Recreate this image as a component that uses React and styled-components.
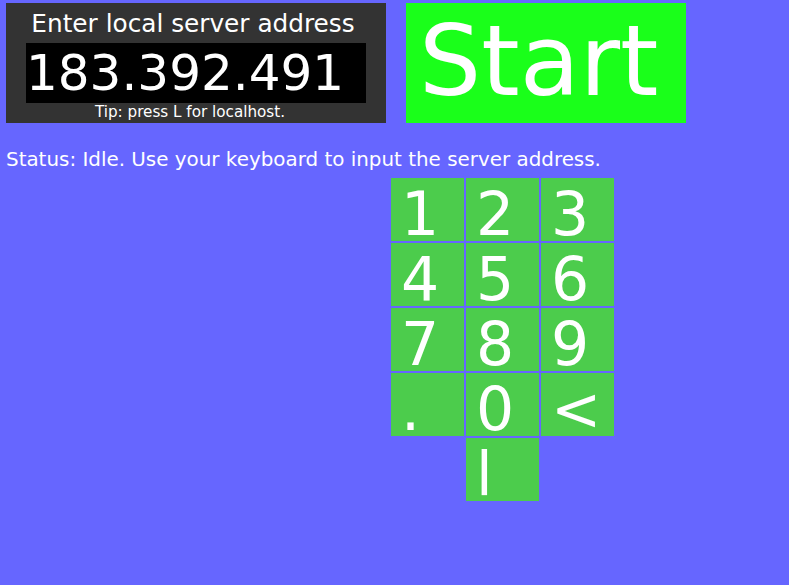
import React from "react";
import styled, { createGlobalStyle } from "styled-components";

const Global = createGlobalStyle`
    html, body {
        margin: 0;
        padding: 0;
        background: #6666ff;
        font-family: "DejaVu Sans", sans-serif;
        color: #fff;
    }
`;

const Page = styled.div`
    padding: 3px 6px;
    min-height: 579px;
`;
const TopRow = styled.div`
    display: flex;
    gap: 20px;
`;
const Panel = styled.div`
    width: 380px;
    height: 120px;
    background: #333333;
    display: flex;
    flex-direction: column;
    align-items: center;
    padding-top: 7px;
    box-sizing: border-box;
`;
const Title = styled.div`
    font-size: 24.75px;
    line-height: 28px;
    padding-right: 6px;
`;
const Address = styled.div`
    margin-top: 5px;
    width: 340px;
    height: 60px;
    background: #000;
    font-size: 50px;
    line-height: 61px;
    white-space: nowrap;
`;
const Tip = styled.div`
    margin-top: 1px;
    padding-right: 12px;
    font-size: 15.2px;
    line-height: 17px;
`;
const StartButton = styled.button`
    width: 280px;
    height: 120px;
    border: none;
    background: #1aff1a;
    color: #fff;
    font-family: inherit;
    font-size: 98px;
    line-height: 116px;
    text-align: left;
    padding: 0 0 0 13px;
    display: flex;
    align-items: flex-start;
`;
const Status = styled.div`
    margin-top: 25px;
    font-size: 19.9px;
    line-height: 23px;
`;
const Keypad = styled.div`
    margin: 7px 0 0 385px;
    display: grid;
    grid-template-columns: repeat(3, 73px);
    grid-auto-rows: 63px;
    gap: 2px;
`;
const Key = styled.button`
    grid-column: ${p => p.col || "auto"};
    border: none;
    background: #4ccc4c;
    color: #fff;
    font-family: inherit;
    font-size: 60px;
    line-height: 54px;
    padding: 9px 10px 0;
    text-align: left;
    display: flex;
    align-items: flex-start;
`;

const keys = ["1", "2", "3", "4", "5", "6", "7", "8", "9", ".", "0", "<"];

export default function App() {
    return <Page>
        <Global />
        <TopRow>
            <Panel>
                <Title>Enter local server address</Title>
                <Address>183.392.491</Address>
                <Tip>Tip: press L for localhost.</Tip>
            </Panel>
            <StartButton>Start</StartButton>
        </TopRow>
        <Status>Status: Idle. Use your keyboard to input the server address.</Status>
        <Keypad>
            {keys.map(k => <Key key={k}>{k}</Key>)}
            <Key col={2}>l</Key>
        </Keypad>
    </Page>;
}
